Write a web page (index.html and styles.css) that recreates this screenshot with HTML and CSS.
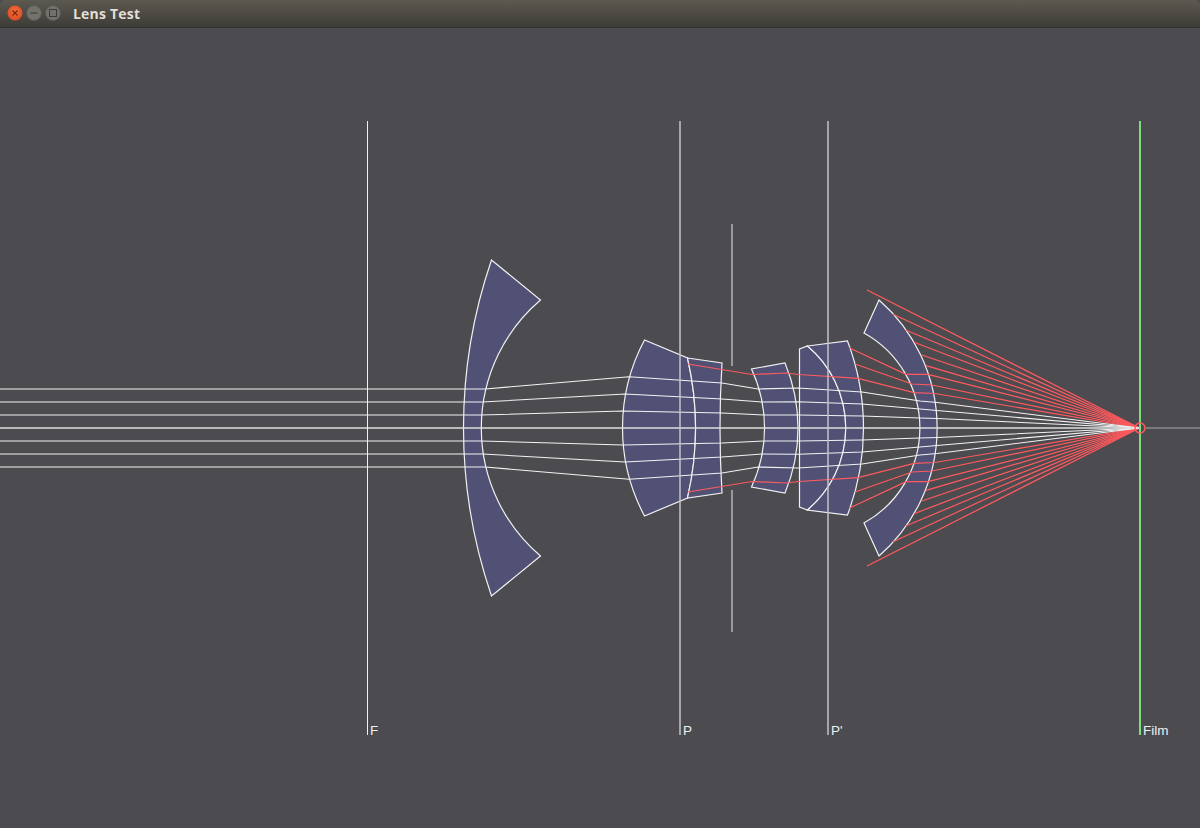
FILE: index.html
```html
<!DOCTYPE html>
<html lang="en">
<head>
<meta charset="utf-8">
<title>Lens Test</title>
<link rel="stylesheet" href="styles.css">
</head>
<body>
<div class="window">
  <header class="titlebar">
    <div class="controls">
      <svg class="btn" viewBox="0 0 16 16"><defs><radialGradient id="closeG" cx="50%" cy="40%" r="60%"><stop offset="0" stop-color="#f3703c"/><stop offset="1" stop-color="#dd4a22"/></radialGradient></defs><circle cx="8" cy="8" r="7.5" fill="url(#closeG)"/><path class="glyph-close" d="M5.5 5.5l5 5M10.5 5.5l-5 5"/></svg>
      <svg class="btn" viewBox="0 0 16 16"><circle class="btn-grey" cx="8" cy="8" r="7.5"/><path class="glyph" d="M4.5 8h7"/></svg>
      <svg class="btn" viewBox="0 0 16 16"><circle class="btn-grey" cx="8" cy="8" r="7.5"/><rect class="glyph" x="4.5" y="4.5" width="7" height="7"/></svg>
    </div>
    <span class="title">Lens Test</span>
  </header>
  <main class="canvas">
    <svg class="scene" width="1200" height="800" viewBox="0 28 1200 800">
      <g class="lenses">
        <path d="M491.5 260A518 518 0 0 0 491.5 596L540.5 556A168 168 0 0 1 540.5 300Z"/>
        <path d="M644.5 340A187 187 0 0 0 644.5 516L687.5 498A310 310 0 0 0 687.5 358Z"/>
        <path d="M687.5 358L722 363A1057 1057 0 0 0 722 493L687.5 498A310 310 0 0 0 687.5 358Z"/>
        <path d="M751.5 369A140 140 0 0 1 751.5 487L785 493A169 169 0 0 0 785 363Z"/>
        <path d="M799.5 349V507L807.5 510A107 107 0 0 0 807.5 346Z"/>
        <path d="M807.5 346L847.5 341A244.5 244.5 0 0 1 847.5 515L807.5 510A107 107 0 0 0 807.5 346Z"/>
        <path d="M879 300A170 170 0 0 1 879 556L864 523A108.7 108.7 0 0 0 864 333Z"/>
      </g>
      <g id="half">
        <g class="red">
          <path d="M688 364L752 374.5L786 373L799 374.5L858 378.3L914 392.7L935 393.5L1139.5 428"/>
          <path d="M849 347.7L906 374.3L928 374.3L1139.5 428"/>
          <path d="M855 364L912 384L932 385L1139.5 428"/>
          <path d="M867 290L1139.5 428"/>
          <path d="M893 314.3L1139.5 428"/>
          <path d="M905.7 330L1139.5 428"/>
          <path d="M914 342.3L1139.5 428"/>
          <path d="M921.7 355L1139.5 428"/>
          <path d="M926 365.7L1139.5 428"/>
        </g>
        <g class="white">
          <path d="M0 389H485L629 376.7L722 383L758 389L798 388L862 392L920 401L937 402.5L1139.5 428"/>
          <path d="M0 402H482.5L625 394L722 399L762 402L798 401.7L862 404L920 409L937 410.5L1139.5 428"/>
          <path d="M0 415H481L623 411L722 413L764 415L798 415L862 416L920 418L937 418.5L1139.5 428"/>
        </g>
      </g>
      <use href="#half" transform="matrix(1 0 0 -1 0 856)"/>
      <path class="axis" d="M0 428H1139"/>
      <path class="axis-after" d="M1146 428H1200"/>
      <g class="stops">
        <path d="M732 224V366M732 490V632"/>
      </g>
      <path class="plane plane-f" d="M367.5 121V735"/>
      <path class="plane" d="M680 121V735"/>
      <path class="plane" d="M828 121V735"/>
      <path class="film" d="M1140 121V735"/>
      <circle class="focus" cx="1140" cy="428" r="5"/>
      <text class="label" x="370" y="734.5">F</text>
      <text class="label" x="683" y="734.5">P</text>
      <text class="label" x="831" y="734.5">P'</text>
      <text class="label" x="1143" y="734.5">Film</text>
    </svg>
  </main>
</div>
</body>
</html>
```
FILE: styles.css
```css
* { box-sizing: border-box; }
html, body { margin: 0; padding: 0; background: #4c4b50; }
.window { width: 1200px; height: 828px; display: flex; flex-direction: column; overflow: hidden; background: #4c4b50; }
.titlebar {
  height: 28px;
  flex: none;
  display: flex;
  align-items: center;
  padding: 0 0 1px 7px;
  gap: 12px;
  background: linear-gradient(#5c5951, #3e3c37);
  border-bottom: 1px solid #35332f;
  border-radius: 5px 5px 0 0;
}
.controls { display: flex; gap: 3px; }
.btn { width: 16px; height: 16px; display: block; }
.btn-grey { fill: #72716b; stroke: #5a5953; stroke-width: 1; }
.glyph { fill: none; stroke: #3c3b37; stroke-width: 1; }
.glyph-close { fill: none; stroke: #7a2a10; stroke-width: 1.2; }
.title { font: bold 14px "Open Sans", "Noto Sans", sans-serif; color: #e2ded5; letter-spacing: 0.2px; }
.canvas { flex: 1; display: block; }
.scene { display: block; }
.lenses path { fill: #515176; stroke: #f0f0f0; stroke-width: 1.2; stroke-linejoin: miter; }
.red path { fill: none; stroke: #ff5a5e; stroke-width: 1.2; }
.white path { fill: none; stroke: #f2f2f2; stroke-width: 1.1; }
.axis { fill: none; stroke: #dedede; stroke-width: 1.6; }
.axis-after { fill: none; stroke: #8a898c; stroke-width: 1.4; }
.stops path { fill: none; stroke: #b4b4b6; stroke-width: 1.5; }
.plane { fill: none; stroke: #c4c4c8; stroke-width: 1.5; }
.plane-f { stroke: #f0f0f0; stroke-width: 1; }
.film { fill: none; stroke: #7fdc7f; stroke-width: 2; }
.focus { fill: none; stroke: #ff5a5e; stroke-width: 1.5; }
.label { font: 13.5px "Liberation Sans", Arial, sans-serif; fill: #f0f0f0; }
```
